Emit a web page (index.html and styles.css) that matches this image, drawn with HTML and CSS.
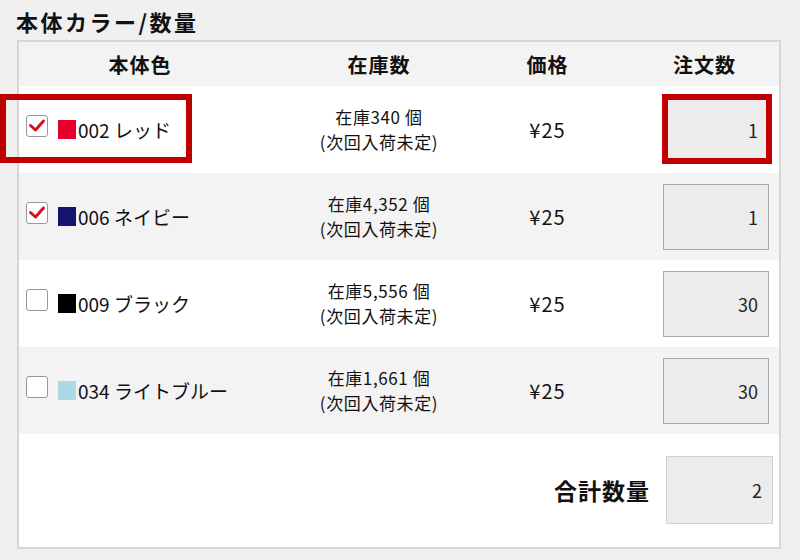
FILE: index.html
```html
<!DOCTYPE html>
<html lang="ja">
<head>
  <meta charset="UTF-8" />
  <title>本体カラー/数量</title>
  <link rel="stylesheet" href="styles.css">
</head>
<body>

<h2 class="title">本体カラー/数量</h2>

<div class="panel">
  <div class="row head">
    <div class="cell">本体色</div>
    <div class="cell">在庫数</div>
    <div class="cell">価格</div>
    <div class="cell qty-head">注文数</div>
  </div>

  <div class="row">
    <div class="cell color">
      <span class="check on"><svg viewBox="0 0 20 20"><path d="M3.5 9.5 L8.5 14 L16.5 5" /></svg></span>
      <span class="swatch" style="background:#e8002d"></span>002 レッド
      <span class="mark"></span>
    </div>
    <div class="cell stock"><p>在庫340 個<br>(次回入荷未定)</p></div>
    <div class="cell price">¥25</div>
    <div class="cell qty"><div class="input">1</div><span class="mark-qty"></span></div>
  </div>

  <div class="row alt">
    <div class="cell color">
      <span class="check on"><svg viewBox="0 0 20 20"><path d="M3.5 9.5 L8.5 14 L16.5 5" /></svg></span>
      <span class="swatch" style="background:#131670"></span>006 ネイビー
    </div>
    <div class="cell stock"><p>在庫4,352 個<br>(次回入荷未定)</p></div>
    <div class="cell price">¥25</div>
    <div class="cell qty"><div class="input">1</div></div>
  </div>

  <div class="row">
    <div class="cell color">
      <span class="check"></span>
      <span class="swatch" style="background:#000000"></span>009 ブラック
    </div>
    <div class="cell stock"><p>在庫5,556 個<br>(次回入荷未定)</p></div>
    <div class="cell price">¥25</div>
    <div class="cell qty"><div class="input">30</div></div>
  </div>

  <div class="row alt">
    <div class="cell color">
      <span class="check"></span>
      <span class="swatch" style="background:#add8e6"></span>034 ライトブルー
    </div>
    <div class="cell stock"><p>在庫1,661 個<br>(次回入荷未定)</p></div>
    <div class="cell price">¥25</div>
    <div class="cell qty"><div class="input">30</div></div>
  </div>

  <div class="total">
    <span class="total-label">合計数量</span>
    <div class="input total-input">2</div>
  </div>
</div>

</body>
</html>
```

FILE: styles.css
```css
body {
  margin: 0;
  background: #f0f0f0;
  color: #111;
  font-family: "Noto Sans CJK JP", "Noto Sans", sans-serif;
}
.title {
  margin: 0;
  padding: 7px 16px 0;
  height: 33px;
  font-size: 22px;
  line-height: 28px;
  letter-spacing: 2.5px;
  font-weight: bold;
}
.panel {
  margin-left: 17px;
  width: 764px;
  height: 509px;
  box-sizing: border-box;
  border: 2px solid #d6d6d6;
  background: #fff;
}
.row {
  display: grid;
  grid-template-columns: 242px 236px 101px 1fr;
  height: 87px;
}
.row.alt {
  background: #f3f3f3;
}
.row.head {
  height: 44px;
  background: #f3f3f3;
  font-size: 20px;
  letter-spacing: 1px;
  font-weight: bold;
}
.cell {
  display: flex;
  align-items: center;
  justify-content: center;
  text-align: center;
}
.head .qty-head {
  justify-content: flex-end;
  padding-right: 43px;
}
.color {
  position: relative;
  justify-content: flex-start;
  padding-left: 7px;
  font-size: 19px;
}
.check {
  width: 20px;
  height: 20px;
  border: 1.5px solid #999;
  border-radius: 3px;
  background: #fff;
  margin: 0 10px 7px 0;
}
.check svg {
  width: 20px;
  height: 20px;
  display: block;
}
.check path {
  fill: none;
  stroke: #d2121e;
  stroke-width: 3;
  stroke-linecap: round;
  stroke-linejoin: round;
}
.swatch {
  width: 18px;
  height: 19px;
  margin-right: 2px;
}
.stock p {
  margin: 0 0 2px;
  font-size: 17px;
  line-height: 25px;
  letter-spacing: 0.6px;
}
.price {
  font-size: 20px;
  letter-spacing: 1px;
}
.qty {
  position: relative;
  justify-content: flex-end;
  padding-right: 10px;
}
.input {
  width: 106px;
  height: 66px;
  box-sizing: border-box;
  border: 1.5px solid #aaa;
  background: #ececec;
  display: flex;
  align-items: center;
  justify-content: flex-end;
  padding-right: 10px;
  font-size: 18px;
  color: #222;
}
.mark {
  position: absolute;
  left: -19px;
  top: 8px;
  width: 192px;
  height: 69px;
  box-sizing: border-box;
  border: 6px solid #c00000;
}
.mark-qty {
  position: absolute;
  right: 7px;
  top: 8px;
  width: 110px;
  height: 70px;
  box-sizing: border-box;
  border: 6px solid #c00000;
}
.total {
  display: flex;
  justify-content: flex-end;
  align-items: center;
  gap: 16px;
  height: 111px;
  padding-right: 6px;
}
.total-label {
  font-size: 23px;
  letter-spacing: 1px;
  font-weight: bold;
}
.total-input {
  width: 107px;
  height: 68px;
  border: 1px solid #d0d0d0;
}
```
